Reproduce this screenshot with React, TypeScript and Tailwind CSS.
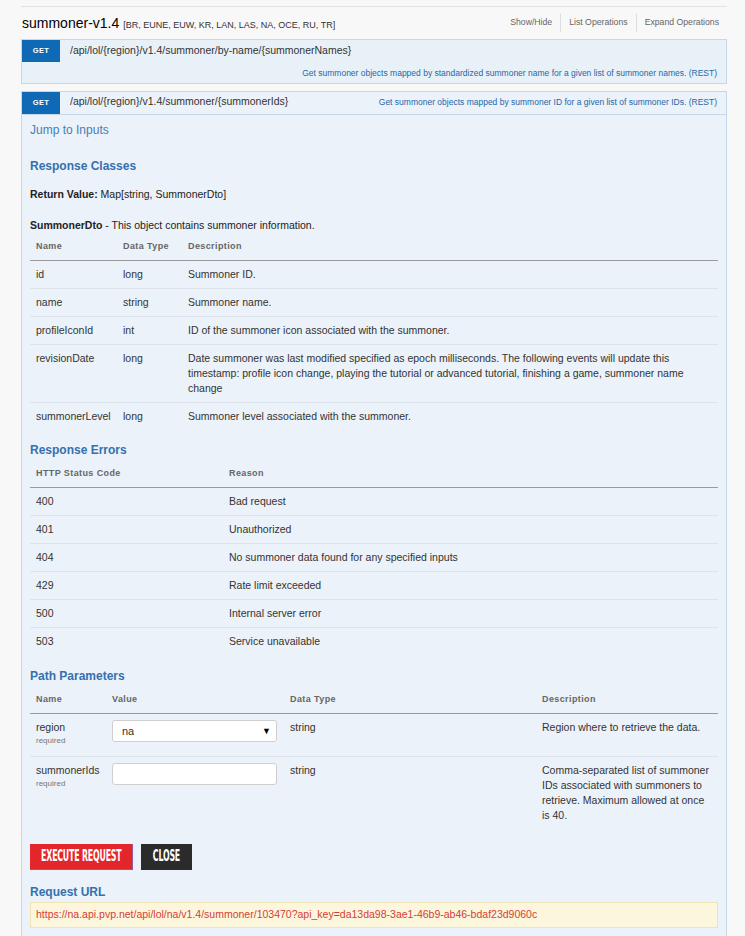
import React from "react";

const font = { fontFamily: '"Liberation Sans", Arial, sans-serif' };
const btnFont = { fontFamily: '"DejaVu Sans Condensed", "DejaVu Sans", sans-serif' };

function Th({ children, className = "" }: { children?: React.ReactNode; className?: string }) {
  return (
    <th className={`text-left align-top font-bold text-[9px] leading-[15px] text-[#666] tracking-[0.4px] py-[6px] px-[6px] border-b border-[#9a9a9a] ${className}`}>
      {children}
    </th>
  );
}

function Td({ children, className = "" }: { children?: React.ReactNode; className?: string }) {
  return (
    <td className={`align-top text-[10.5px] leading-[15px] text-[#333] py-[6px] px-[6px] ${className}`}>{children}</td>
  );
}

const dtoRows: [string, string, string][] = [
  ["id", "long", "Summoner ID."],
  ["name", "string", "Summoner name."],
  ["profileIconId", "int", "ID of the summoner icon associated with the summoner."],
  [
    "revisionDate",
    "long",
    "Date summoner was last modified specified as epoch milliseconds. The following events will update this timestamp: profile icon change, playing the tutorial or advanced tutorial, finishing a game, summoner name change",
  ],
  ["summonerLevel", "long", "Summoner level associated with the summoner."],
];

const errRows: [string, string][] = [
  ["400", "Bad request"],
  ["401", "Unauthorized"],
  ["404", "No summoner data found for any specified inputs"],
  ["429", "Rate limit exceeded"],
  ["500", "Internal server error"],
  ["503", "Service unavailable"],
];

function Heading({ children, className = "" }: { children: React.ReactNode; className?: string }) {
  return <h4 className={`text-[12px] leading-[16px] font-bold text-[#3570ae] ${className}`}>{children}</h4>;
}

export default function App() {
  return (
    <div className="min-h-[936px] w-[745px] bg-[#f8f8f8]" style={font}>
      <div className="h-[6px]" />
      <div className="ml-[21px] w-[706px] border-t border-[#e2e2e2]">
        {/* title row */}
        <div className="flex items-center justify-between h-[31px] pt-[1px]">
          <div className="flex items-baseline pl-[1px]">
            <span className="text-[14px] text-black">summoner-v1.4</span>
            <span className="ml-[4px] text-[9px] text-[#333]">[BR, EUNE, EUW, KR, LAN, LAS, NA, OCE, RU, TR]</span>
          </div>
          <div className="flex items-center text-[8.7px] text-[#666] pr-[8px]">
            <span className="pr-[8px]">Show/Hide</span>
            <span className="h-[18px] border-l border-[#dcdcdc]" />
            <span className="px-[8px]">List Operations</span>
            <span className="h-[18px] border-l border-[#dcdcdc]" />
            <span className="pl-[8px]">Expand Operations</span>
          </div>
        </div>

        {/* first endpoint */}
        <div className="mt-[1px] border border-[#c5d8ea] bg-[#e9f1f8]">
          <div className="flex items-start">
            <div className="w-[38px] h-[22px] bg-[#0f69b4] text-white text-[7.5px] font-bold flex items-center justify-center tracking-[0.3px]">
              GET
            </div>
            <div className="ml-[10px] text-[10.5px] leading-[20px] text-[#333]">/api/lol/&#123;region&#125;/v1.4/summoner/by-name/&#123;summonerNames&#125;</div>
          </div>
          <div className="text-right text-[8.5px] text-[#1f66a8] pr-[9px] h-[21px] leading-[23px]">
            Get summoner objects mapped by standardized summoner name for a given list of summoner names. (REST)
          </div>
        </div>

        {/* second endpoint */}
        <div className="mt-[7px] border border-[#c5d8ea] bg-[#ebf2f9]">
          <div className="flex items-center h-[23px] border-b border-[#c5d8ea]">
            <div className="w-[38px] h-[22px] bg-[#0f69b4] text-white text-[7.5px] font-bold flex items-center justify-center tracking-[0.3px] self-start">
              GET
            </div>
            <div className="ml-[10px] text-[10.5px] text-[#333] -mt-[3px]">/api/lol/&#123;region&#125;/v1.4/summoner/&#123;summonerIds&#125;</div>
            <div className="ml-auto pr-[9px] text-[8.5px] text-[#1f66a8] -mt-[1px]">
              Get summoner objects mapped by summoner ID for a given list of summoner IDs. (REST)
            </div>
          </div>

          <div className="px-[8px] pb-[10px]">
            <div className="mt-[8px] text-[12px] leading-[15px] text-[#4a7db5]">Jump to Inputs</div>

            <Heading className="mt-[20px]">Response Classes</Heading>
            <p className="mt-[13px] text-[10.5px] leading-[15px] text-[#222]">
              <b>Return Value:</b> Map[string, SummonerDto]
            </p>
            <p className="mt-[16px] text-[10.5px] leading-[15px] text-[#222]">
              <b>SummonerDto</b> - This object contains summoner information.
            </p>
            <table className="w-[688px] border-collapse table-fixed">
              <thead>
                <tr>
                  <Th className="w-[87px]">Name</Th>
                  <Th className="w-[65px]">Data Type</Th>
                  <Th>Description</Th>
                </tr>
              </thead>
              <tbody>
                {dtoRows.map((r, i) => (
                  <tr key={r[0]} className={i < dtoRows.length - 1 ? "border-b border-[#dce3ea]" : ""}>
                    <Td>{r[0]}</Td>
                    <Td>{r[1]}</Td>
                    <Td className="pr-[20px]">{r[2]}</Td>
                  </tr>
                ))}
              </tbody>
            </table>

            <Heading className="mt-[12px]">Response Errors</Heading>
            <table className="mt-[2px] w-[688px] border-collapse table-fixed">
              <thead>
                <tr>
                  <Th className="w-[193px]">HTTP Status Code</Th>
                  <Th>Reason</Th>
                </tr>
              </thead>
              <tbody>
                {errRows.map((r, i) => (
                  <tr key={r[0]} className={i < errRows.length - 1 ? "border-b border-[#dce3ea]" : ""}>
                    <Td>{r[0]}</Td>
                    <Td>{r[1]}</Td>
                  </tr>
                ))}
              </tbody>
            </table>

            <Heading className="mt-[13px]">Path Parameters</Heading>
            <table className="mt-[2px] w-[688px] border-collapse table-fixed">
              <thead>
                <tr>
                  <Th className="w-[76px]">Name</Th>
                  <Th className="w-[178px]">Value</Th>
                  <Th className="w-[252px]">Data Type</Th>
                  <Th>Description</Th>
                </tr>
              </thead>
              <tbody>
                <tr className="border-b border-[#dce3ea] h-[43px]">
                  <Td>
                    <div>region</div>
                    <div className="text-[8px] leading-[11px] text-[#777]">required</div>
                  </Td>
                  <Td>
                    <div className="w-[165px] h-[22px] bg-white border border-[#cfcfcf] rounded-[3px] flex items-center justify-between pl-[9px] pr-[5px] text-[11px] text-[#333]">
                      <span>na</span>
                      <span className="text-[9px] text-black">▼</span>
                    </div>
                  </Td>
                  <Td>string</Td>
                  <Td>Region where to retrieve the data.</Td>
                </tr>
                <tr className="h-[74px]">
                  <Td>
                    <div>summonerIds</div>
                    <div className="text-[8px] leading-[11px] text-[#777]">required</div>
                  </Td>
                  <Td>
                    <div className="w-[165px] h-[22px] bg-white border border-[#cfcfcf] rounded-[3px]" />
                  </Td>
                  <Td>string</Td>
                  <Td className="pr-[6px]">
                    Comma-separated list of summoner IDs associated with summoners to retrieve. Maximum allowed at once is 40.
                  </Td>
                </tr>
              </tbody>
            </table>

            <div className="mt-[13px] flex gap-[8px]">
              <button
                className="h-[26px] w-[103px] bg-[#e3262b] border-r border-b border-[#9a5a9a] text-white text-[15px] font-bold uppercase flex items-center justify-center overflow-hidden"
                style={btnFont}
              >
                <span className="inline-block scale-x-[0.58] whitespace-nowrap tracking-[-0.3px]">EXECUTE REQUEST</span>
              </button>
              <button
                className="h-[26px] w-[51px] bg-[#2b2b2b] text-white text-[15px] font-bold uppercase flex items-center justify-center overflow-hidden"
                style={btnFont}
              >
                <span className="inline-block scale-x-[0.58] tracking-[-0.3px]">CLOSE</span>
              </button>
            </div>

            <Heading className="mt-[14px]">Request URL</Heading>
            <div className="mt-[2px] w-[688px] h-[26px] bg-[#fcf6dc] border border-[#efe4b8] flex items-center px-[5px] text-[10.5px] text-[#d43d3a]">
              https://na.api.pvp.net/api/lol/na/v1.4/summoner/103470?api_key=da13da98-3ae1-46b9-ab46-bdaf23d9060c
            </div>
          </div>
        </div>
      </div>
    </div>
  );
}
